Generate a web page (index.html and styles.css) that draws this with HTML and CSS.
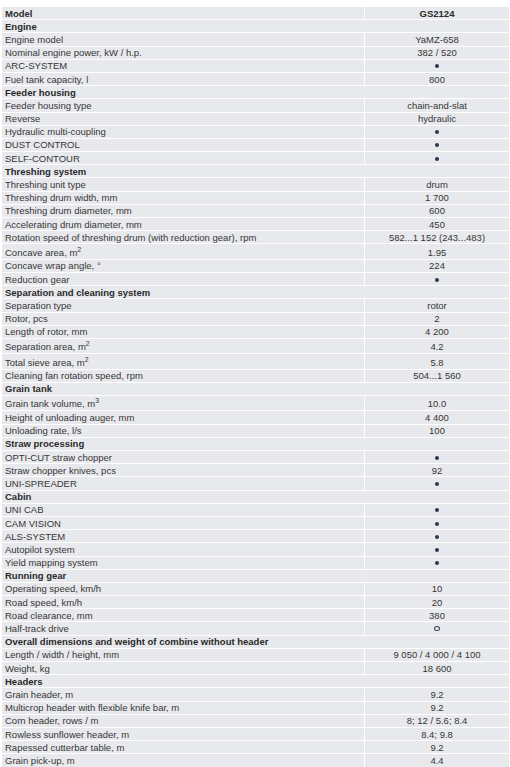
FILE: index.html
```html
<!DOCTYPE html>
<html>
<head>
<meta charset="utf-8">
<link rel="stylesheet" href="styles.css">
</head>
<body>
<table class="spec">
<tbody>
<tr class="model"><td class="name">Model</td><td class="val">GS2124</td></tr>
<tr class="sec"><td colspan="2">Engine</td></tr>
<tr><td class="name">Engine model</td><td class="val">YaMZ-658</td></tr>
<tr><td class="name">Nominal engine power, kW / h.p.</td><td class="val">382 / 520</td></tr>
<tr><td class="name">ARC-SYSTEM</td><td class="val"><span class="dot"></span></td></tr>
<tr><td class="name">Fuel tank capacity, l</td><td class="val">800</td></tr>
<tr class="sec"><td colspan="2">Feeder housing</td></tr>
<tr><td class="name">Feeder housing type</td><td class="val">chain-and-slat</td></tr>
<tr><td class="name">Reverse</td><td class="val">hydraulic</td></tr>
<tr><td class="name">Hydraulic multi-coupling</td><td class="val"><span class="dot"></span></td></tr>
<tr><td class="name">DUST CONTROL</td><td class="val"><span class="dot"></span></td></tr>
<tr><td class="name">SELF-CONTOUR</td><td class="val"><span class="dot"></span></td></tr>
<tr class="sec"><td colspan="2">Threshing system</td></tr>
<tr><td class="name">Threshing unit type</td><td class="val">drum</td></tr>
<tr><td class="name">Threshing drum width, mm</td><td class="val">1 700</td></tr>
<tr><td class="name">Threshing drum diameter, mm</td><td class="val">600</td></tr>
<tr><td class="name">Accelerating drum diameter, mm</td><td class="val">450</td></tr>
<tr><td class="name">Rotation speed of threshing drum (with reduction gear), rpm</td><td class="val">582...1 152 (243...483)</td></tr>
<tr class="tall"><td class="name">Concave area, m<sup>2</sup></td><td class="val">1.95</td></tr>
<tr><td class="name">Concave wrap angle, °</td><td class="val">224</td></tr>
<tr><td class="name">Reduction gear</td><td class="val"><span class="dot"></span></td></tr>
<tr class="sec"><td colspan="2">Separation and cleaning system</td></tr>
<tr><td class="name">Separation type</td><td class="val">rotor</td></tr>
<tr><td class="name">Rotor, pcs</td><td class="val">2</td></tr>
<tr><td class="name">Length of rotor, mm</td><td class="val">4 200</td></tr>
<tr class="tall"><td class="name">Separation area, m<sup>2</sup></td><td class="val">4.2</td></tr>
<tr class="tall"><td class="name">Total sieve area, m<sup>2</sup></td><td class="val">5.8</td></tr>
<tr><td class="name">Cleaning fan rotation speed, rpm</td><td class="val">504...1 560</td></tr>
<tr class="sec"><td colspan="2">Grain tank</td></tr>
<tr class="tall"><td class="name">Grain tank volume, m<sup>3</sup></td><td class="val">10.0</td></tr>
<tr><td class="name">Height of unloading auger, mm</td><td class="val">4 400</td></tr>
<tr><td class="name">Unloading rate, l/s</td><td class="val">100</td></tr>
<tr class="sec"><td colspan="2">Straw processing</td></tr>
<tr><td class="name">OPTI-CUT straw chopper</td><td class="val"><span class="dot"></span></td></tr>
<tr><td class="name">Straw chopper knives, pcs</td><td class="val">92</td></tr>
<tr><td class="name">UNI-SPREADER</td><td class="val"><span class="dot"></span></td></tr>
<tr class="sec"><td colspan="2">Cabin</td></tr>
<tr><td class="name">UNI CAB</td><td class="val"><span class="dot"></span></td></tr>
<tr><td class="name">CAM VISION</td><td class="val"><span class="dot"></span></td></tr>
<tr><td class="name">ALS-SYSTEM</td><td class="val"><span class="dot"></span></td></tr>
<tr><td class="name">Autopilot system</td><td class="val"><span class="dot"></span></td></tr>
<tr><td class="name">Yield mapping system</td><td class="val"><span class="dot"></span></td></tr>
<tr class="sec"><td colspan="2">Running gear</td></tr>
<tr><td class="name">Operating speed, km/h</td><td class="val">10</td></tr>
<tr><td class="name">Road speed, km/h</td><td class="val">20</td></tr>
<tr><td class="name">Road clearance, mm</td><td class="val">380</td></tr>
<tr><td class="name">Half-track drive</td><td class="val"><span class="ring"></span></td></tr>
<tr class="sec"><td colspan="2">Overall dimensions and weight of combine without header</td></tr>
<tr><td class="name">Length / width / height, mm</td><td class="val">9 050 / 4 000 / 4 100</td></tr>
<tr><td class="name">Weight, kg</td><td class="val">18 600</td></tr>
<tr class="sec"><td colspan="2">Headers</td></tr>
<tr><td class="name">Grain header, m</td><td class="val">9.2</td></tr>
<tr><td class="name">Multicrop header with flexible knife bar, m</td><td class="val">9.2</td></tr>
<tr><td class="name">Corn header, rows / m</td><td class="val">8; 12 / 5.6; 8.4</td></tr>
<tr><td class="name">Rowless sunflower header, m</td><td class="val">8.4; 9.8</td></tr>
<tr><td class="name">Rapessed cutterbar table, m</td><td class="val">9.2</td></tr>
<tr><td class="name">Grain pick-up, m</td><td class="val">4.4</td></tr>
</tbody>
</table>
</body>
</html>
```
FILE: styles.css
```css
html, body {
  margin: 0;
  padding: 0;
  overflow: hidden;
  background: #ffffff;
}

.spec {
  margin: 6px 0 0 1px;
  width: 509px;
  border-collapse: separate;
  border-spacing: 1px;
  table-layout: fixed;
  font-family: "Liberation Sans", Arial, sans-serif;
  font-size: 9.5px;
  color: #363636;
}

.spec td {
  background: #e8e9ec;
  height: 12.2px;
  padding: 0 0 0 3px;
  line-height: 11px;
  vertical-align: middle;
  white-space: nowrap;
  overflow: hidden;
}

.spec td.name {
  width: 359px;
}

.spec td.val {
  text-align: center;
  padding: 0;
}

.spec tr.tall td {
  height: 14.4px;
  padding-top: 0;
  vertical-align: bottom;
  line-height: 12px;
}

.spec sup {
  font-size: 7px;
  line-height: 0;
  vertical-align: 4px;
}

.spec tr.sec td,
.spec tr.model td {
  font-weight: bold;
  color: #2a2a2a;
}

.dot {
  display: inline-block;
  width: 4px;
  height: 4px;
  border-radius: 50%;
  background: #2c3550;
  vertical-align: 1px;
}

.ring {
  display: inline-block;
  width: 4px;
  height: 3px;
  border: 1px solid #3a4258;
  border-radius: 50%;
  vertical-align: 1px;
}
```
